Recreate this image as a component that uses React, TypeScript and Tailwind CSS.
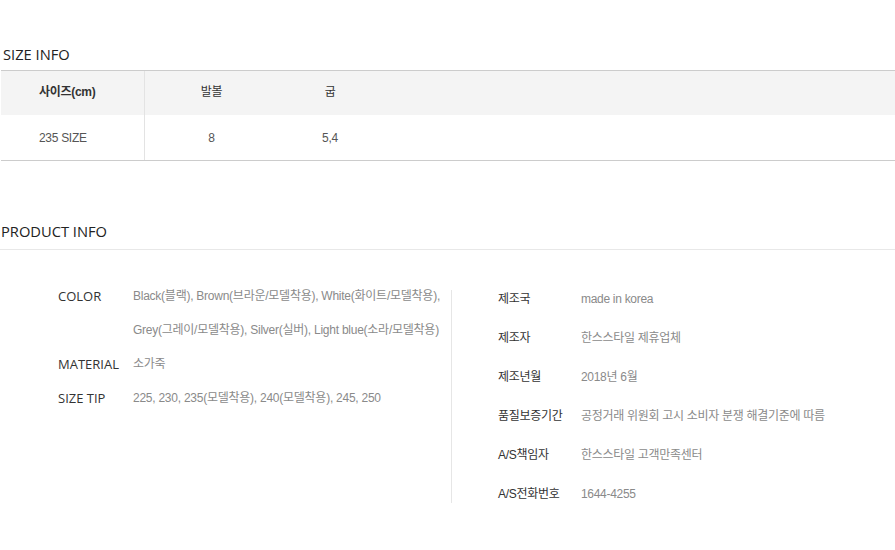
import React from "react";

const ko = '"Liberation Sans", "Noto Sans CJK KR", sans-serif';
const head = '"Open Sans", "Noto Sans", sans-serif';

const leftRows: { label: string; lines: string[] }[] = [
  {
    label: "COLOR",
    lines: [
      "Black(블랙), Brown(브라운/모델착용), White(화이트/모델착용),",
      "Grey(그레이/모델착용), Silver(실버), Light blue(소라/모델착용)",
    ],
  },
  { label: "MATERIAL", lines: ["소가죽"] },
  { label: "SIZE TIP", lines: ["225, 230, 235(모델착용), 240(모델착용), 245, 250"] },
];

const rightRows: [string, string][] = [
  ["제조국", "made in korea"],
  ["제조자", "한스스타일 제휴업체"],
  ["제조년월", "2018년 6월"],
  ["품질보증기간", "공정거래 위원회 고시 소비자 분쟁 해결기준에 따름"],
  ["A/S책임자", "한스스타일 고객만족센터"],
  ["A/S전화번호", "1644-4255"],
];

export default function App() {
  return (
    <div className="w-[895px] h-[550px] bg-white overflow-hidden">
      <div className="pt-[44px]">
        <h2 className="pl-[3px] text-[14.7px] leading-[20px] text-[#222]" style={{ fontFamily: head }}>
          SIZE INFO
        </h2>
        <div className="mt-[6px] ml-[1px] border-t border-b border-[#cccccc] text-[12px] tracking-[-0.3px]" style={{ fontFamily: ko }}>
          <div className="flex h-[44px] bg-[#f4f4f4] text-[#333]">
            <div className="w-[144px] border-r border-[#e3e3e3] flex items-center pl-[38px] pb-[2px] font-bold">사이즈(cm)</div>
            <div className="w-[133px] flex items-center justify-center pb-[2px]">발볼</div>
            <div className="w-[104px] flex items-center justify-center pb-[2px]">굽</div>
            <div className="flex-1" />
          </div>
          <div className="flex h-[45px] text-[#555]">
            <div className="w-[144px] border-r border-[#e3e3e3] flex items-center pl-[38px]">235 SIZE</div>
            <div className="w-[133px] flex items-center justify-center">8</div>
            <div className="w-[104px] flex items-center justify-center">5,4</div>
            <div className="flex-1" />
          </div>
        </div>
      </div>

      <div className="mt-[60px]">
        <h2 className="pl-[1px] text-[14.7px] leading-[20px] text-[#222]" style={{ fontFamily: head }}>
          PRODUCT INFO
        </h2>
        <div className="mt-[8px] border-t border-[#e8e8e8]" />
        <div className="flex pt-[30px]">
          <div className="w-[451px] pl-[58px] -mt-[1px]">
            {leftRows.map((r) => (
              <div key={r.label} className="flex">
                <div className="w-[75px] text-[13px] leading-[34px] text-[#333]" style={{ fontFamily: head }}>
                  {r.label}
                </div>
                <div className="text-[12px] leading-[34px] text-[#8a8a8a] tracking-[-0.25px]" style={{ fontFamily: ko }}>
                  {r.lines.map((l) => (
                    <div key={l}>{l}</div>
                  ))}
                </div>
              </div>
            ))}
          </div>
          <div className="w-px bg-[#e6e6e6] mt-[10px] h-[213px]" />
          <div className="pl-[46px]" style={{ fontFamily: ko }}>
            {rightRows.map(([k, v]) => (
              <div key={k} className="flex text-[12px] leading-[39px] tracking-[-0.3px]">
                <div className="w-[83px] text-[#333]">{k}</div>
                <div className="text-[#8a8a8a]">{v}</div>
              </div>
            ))}
          </div>
        </div>
      </div>
    </div>
  );
}
